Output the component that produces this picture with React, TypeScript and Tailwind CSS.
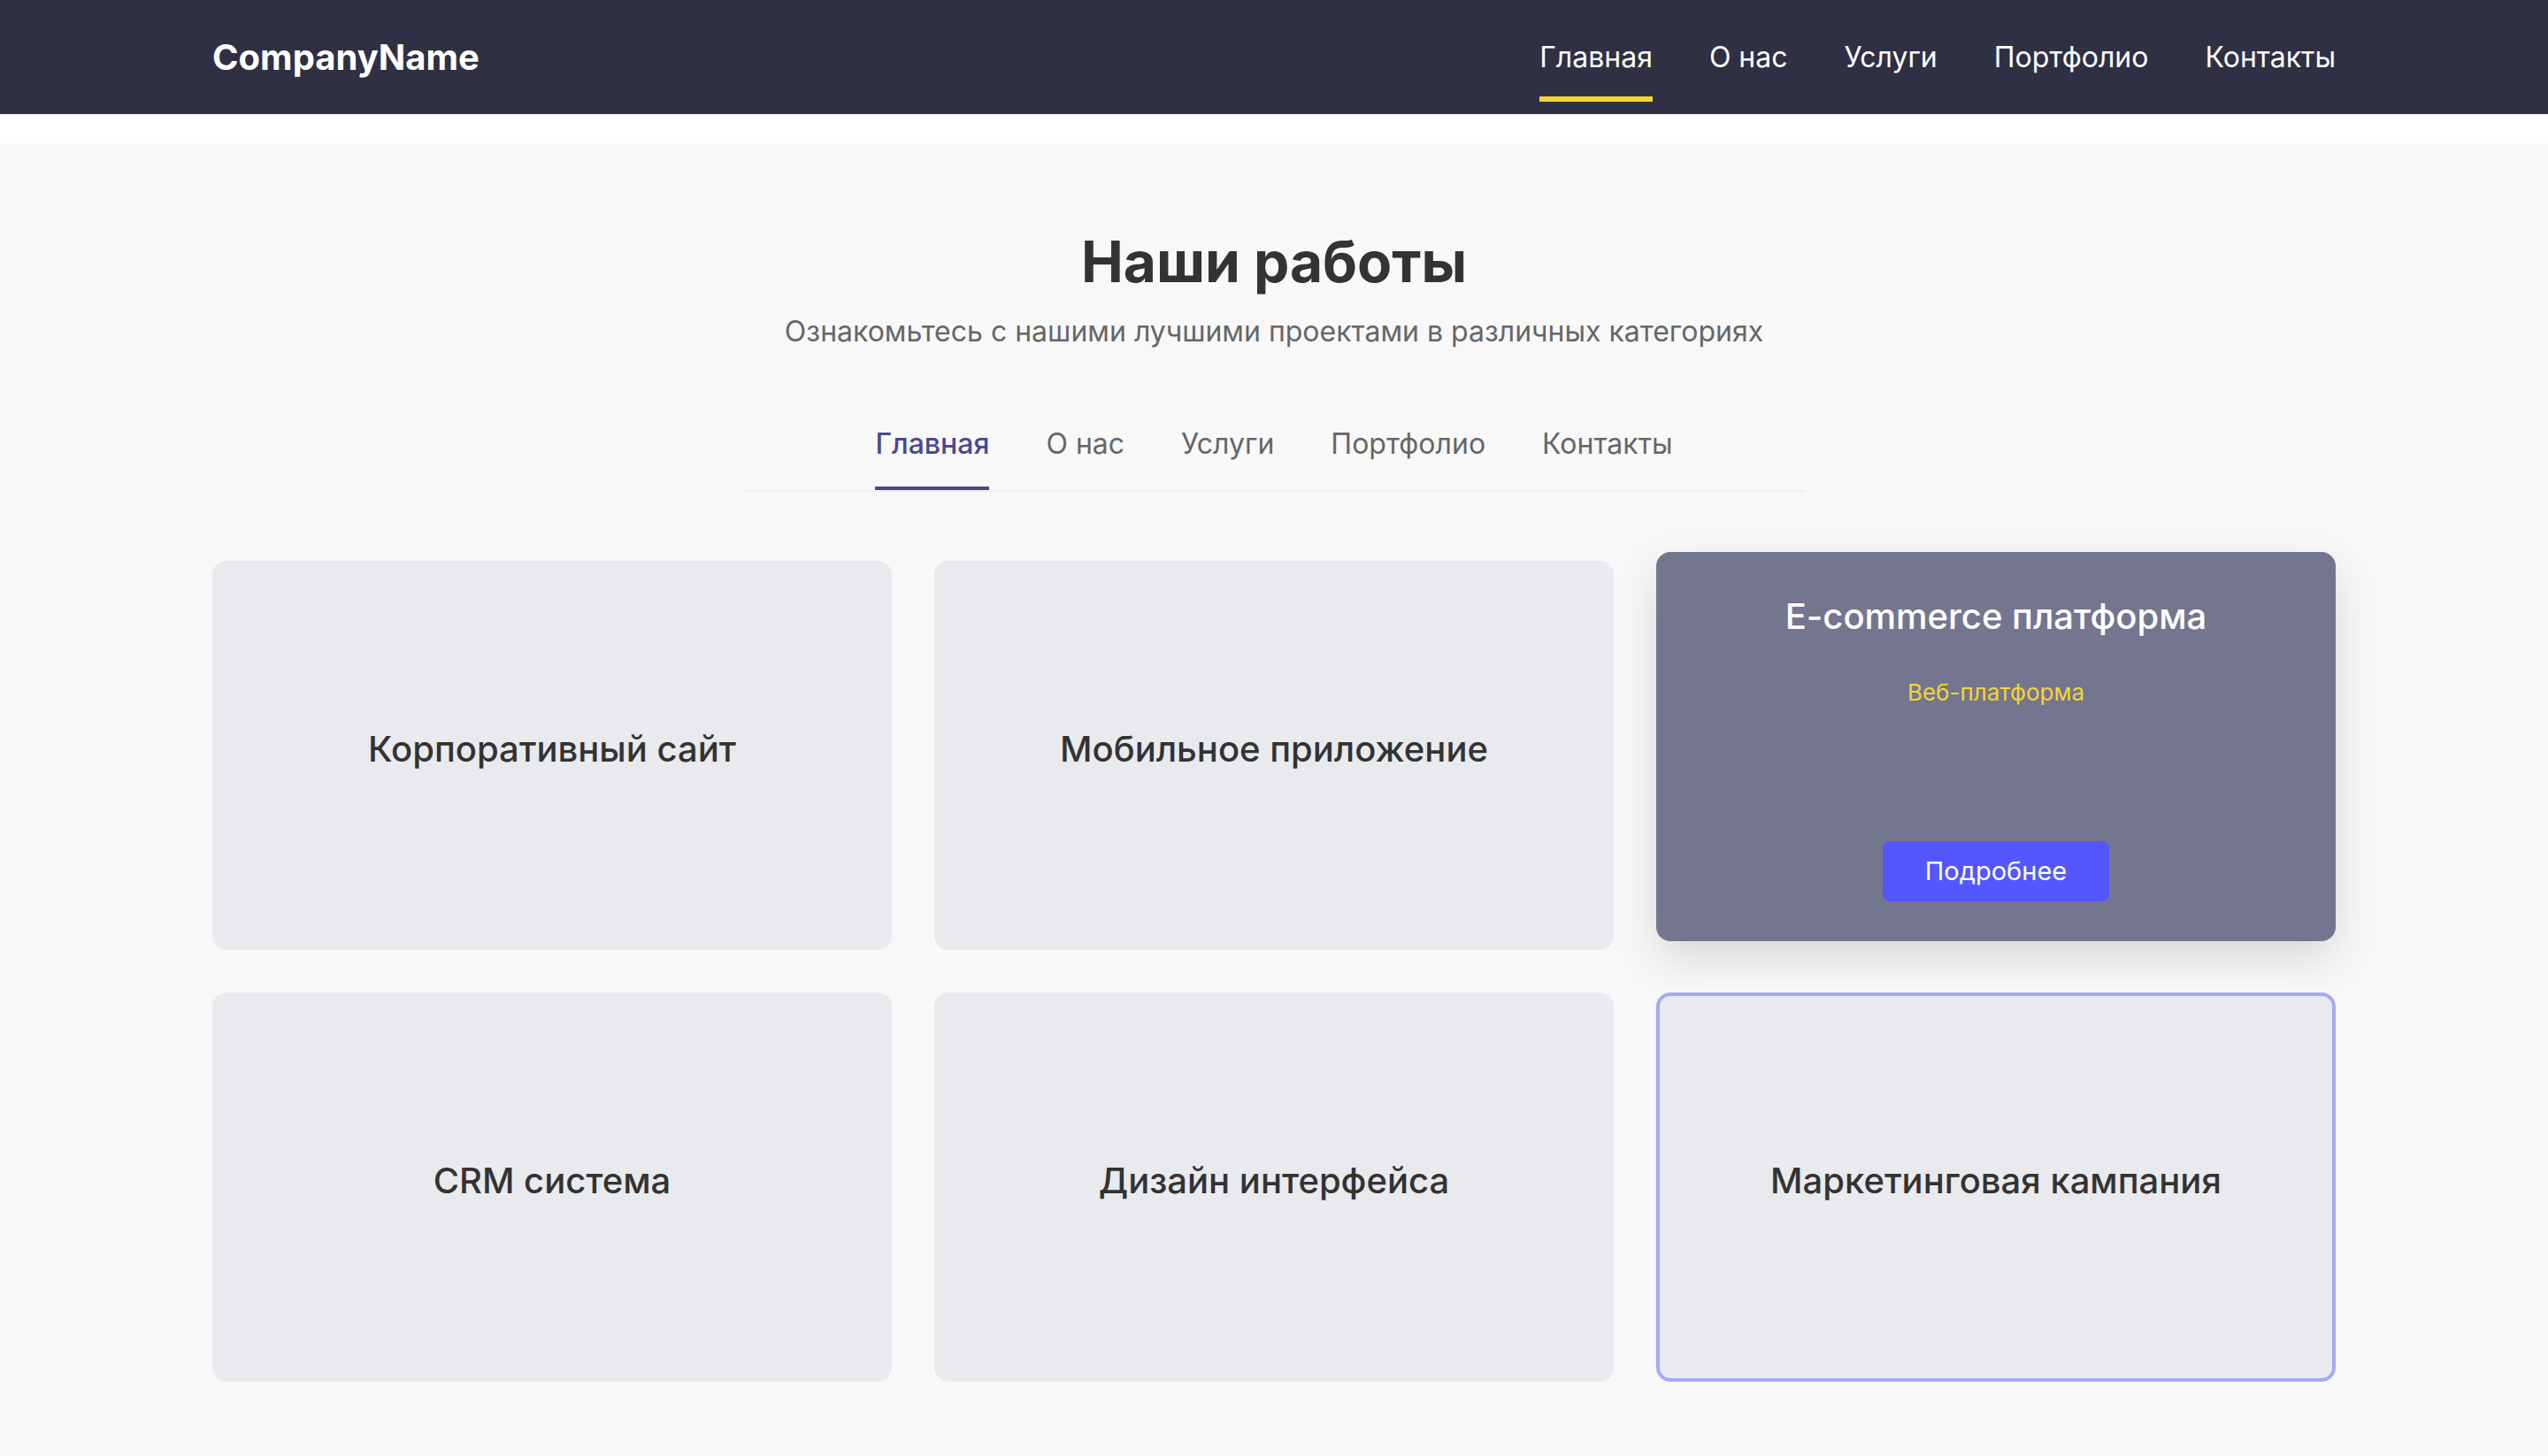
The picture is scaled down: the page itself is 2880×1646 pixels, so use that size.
const navItems = ["Главная", "О нас", "Услуги", "Портфолио", "Контакты"];

const projects = [
	{ title: "Корпоративный сайт", category: "Веб-сайт" },
	{ title: "Мобильное приложение", category: "Приложение" },
	{ title: "E-commerce платформа", category: "Веб-платформа", active: true },
	{ title: "CRM система", category: "Система" },
	{ title: "Дизайн интерфейса", category: "UI/UX" },
	{ title: "Маркетинговая кампания", category: "Маркетинг", outlined: true },
];

const Header = () => (
	<header className="bg-[#2f3044] h-[129px]">
		<div className="max-w-[2400px] mx-auto h-full flex items-center justify-between">
			<div className="text-white text-[40px] font-bold">CompanyName</div>
			<nav className="flex gap-16">
				{navItems.map((item, i) => (
					<a key={item} href="#" className="relative text-white text-[32px] leading-[1.5]">
						{item}
						{i === 0 && (
							<span className="absolute left-0 right-0 -bottom-[26px] h-[6px] bg-[#f5d535]" />
						)}
					</a>
				))}
			</nav>
		</div>
	</header>
);

const ProjectCard = ({
	title,
	category,
	active,
	outlined,
}: {
	title: string;
	category: string;
	active?: boolean;
	outlined?: boolean;
}) => {
	if (active) {
		return (
			<div className="h-[440px] -translate-y-[10px] rounded-2xl bg-[#74768f] shadow-[0_20px_50px_rgba(0,0,0,0.13)] flex flex-col items-center pt-[43px] pb-[45px]">
				<h3 className="text-white text-[40px] font-medium leading-[1.5]">{title}</h3>
				<p className="mt-[36px] text-[#f5d535] text-[26px] leading-[1.5]">{category}</p>
				<button className="mt-auto bg-[#5457ff] text-white text-[29px] leading-[1.5] px-12 py-3 rounded-lg">
					Подробнее
				</button>
			</div>
		);
	}
	return (
		<div
			className={`h-[440px] rounded-2xl bg-[#e9eaee] flex items-center justify-center ${
				outlined ? "border-4 border-[#a6a9f3]" : ""
			}`}
		>
			<h3 className="mb-[14px] text-[#333] text-[40px] font-medium leading-[1.5]">{title}</h3>
		</div>
	);
};

export default function App() {
	return (
		<div className="min-h-screen bg-[#f8f8f8] font-['Inter',sans-serif]">
			<Header />
			<div className="h-[33px] bg-white" />

			<main className="max-w-[2400px] mx-auto pt-[96px] pb-[80px]">
				<div className="text-center">
					<h1 className="text-[64px] font-bold leading-[1.2] text-[#333]">Наши работы</h1>
					<p className="mt-[16px] text-[32px] leading-[1.5] text-[#666]">
						Ознакомьтесь с нашими лучшими проектами в различных категориях
					</p>
				</div>

				<div className="mt-[62px] max-w-[1200px] mx-auto border-b-2 border-[#eeeeee] flex justify-center gap-16">
					{navItems.map((item, i) => (
						<button
							key={item}
							className={`pt-[17px] pb-6 border-b-4 text-[32px] leading-[1.5] ${
								i === 0
									? "border-[#48488f] text-[#48488f] font-medium"
									: "border-transparent text-[#666]"
							}`}
						>
							{item}
						</button>
					))}
				</div>

				<div className="mt-[78px] grid grid-cols-3 gap-12">
					{projects.map((p) => (
						<ProjectCard key={p.title} {...p} />
					))}
				</div>
			</main>
		</div>
	);
}
